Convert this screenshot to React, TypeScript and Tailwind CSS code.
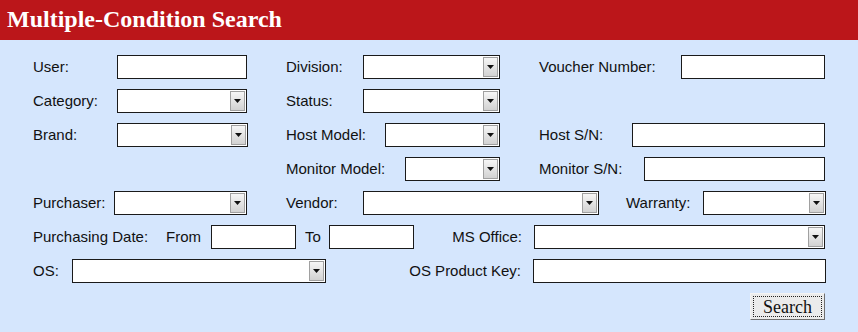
import React from "react";

const Label = ({ text, className = "" }: { text: string; className?: string }) => (
  <span className={`shrink-0 whitespace-nowrap ${className}`}>{text}</span>
);

const TextBox = ({ className = "" }: { className?: string }) => (
  <div className={`h-6 shrink-0 border border-[#1a1a1a] bg-white ${className}`} />
);

const Select = ({ className = "" }: { className?: string }) => (
  <div className={`flex h-6 shrink-0 justify-end border border-[#1a1a1a] bg-white p-px ${className}`}>
    <div className="flex h-full w-[15px] items-center justify-center border border-[#a0a0a0] bg-gradient-to-b from-[#f6f6f6] to-[#d2d2d2]">
      <svg width="7" height="4" viewBox="0 0 7 4">
        <path d="M0 0h7L3.5 4z" fill="#111" />
      </svg>
    </div>
  </div>
);

const Row = ({ children, className = "" }: { children: React.ReactNode; className?: string }) => (
  <div className={`flex h-6 items-center ${className}`}>{children}</div>
);

const App = () => {
  return (
    <div className="h-[332px] w-[858px] overflow-hidden bg-[#d5e6fd] font-['Liberation_Sans',Arial,sans-serif] text-[15px] text-[#111]">
      <div className="flex h-10 items-center bg-[#bb161a] pl-[7px] pb-[2px] font-['Liberation_Serif','Times_New_Roman',serif] text-[24px] font-bold text-white">
        Multiple-Condition Search
      </div>

      <div className="flex flex-col gap-[10px] pt-[15px] pl-[33px]">
        <Row>
          <Label text="User:" className="w-[84px]" />
          <TextBox className="w-[130px]" />
          <Label text="Division:" className="ml-[39px] w-[77px]" />
          <Select className="w-[137px]" />
          <Label text="Voucher Number:" className="ml-[39px] w-[142px]" />
          <TextBox className="w-[144px]" />
        </Row>

        <Row>
          <Label text="Category:" className="w-[84px]" />
          <Select className="w-[130px]" />
          <Label text="Status:" className="ml-[39px] w-[77px]" />
          <Select className="w-[137px]" />
        </Row>

        <Row>
          <Label text="Brand:" className="w-[84px]" />
          <Select className="w-[131px]" />
          <Label text="Host Model:" className="ml-[38px] w-[99px]" />
          <Select className="w-[115px]" />
          <Label text="Host S/N:" className="ml-[39px] w-[93px]" />
          <TextBox className="w-[193px]" />
        </Row>

        <Row className="pl-[253px]">
          <Label text="Monitor Model:" className="w-[119px]" />
          <Select className="w-[95px]" />
          <Label text="Monitor S/N:" className="ml-[39px] w-[105px]" />
          <TextBox className="w-[181px]" />
        </Row>

        <Row>
          <Label text="Purchaser:" className="w-[81px]" />
          <Select className="w-[133px]" />
          <Label text="Vendor:" className="ml-[39px] w-[77px]" />
          <Select className="w-[236px]" />
          <Label text="Warranty:" className="ml-[27px] w-[77px]" />
          <Select className="w-[123px]" />
        </Row>

        <Row>
          <Label text="Purchasing Date:" className="w-[133px]" />
          <Label text="From" className="w-[45px]" />
          <TextBox className="w-[85px]" />
          <Label text="To" className="ml-[9px] w-[24px]" />
          <TextBox className="w-[85px]" />
          <Label text="MS Office:" className="w-[120px] pr-[12px] text-right" />
          <Select className="w-[291px]" />
        </Row>

        <Row>
          <Label text="OS:" className="w-[39px]" />
          <Select className="w-[254px]" />
          <Label text="OS Product Key:" className="w-[207px] pr-[12px] text-right" />
          <TextBox className="w-[293px]" />
        </Row>

        <div className="flex w-[792px] justify-end">
          <button className="h-[27px] w-[75px] border border-t-[#f4f4f4] border-l-[#f4f4f4] border-r-[#6f6f6f] border-b-[#6f6f6f] bg-[#ebebeb] p-[2px] font-['Liberation_Serif','Times_New_Roman',serif] text-[18px] leading-none text-[#111]">
            <span className="flex h-full w-full items-center justify-center border border-dotted border-[#222]">
              Search
            </span>
          </button>
        </div>
      </div>
    </div>
  );
};

export default App;
